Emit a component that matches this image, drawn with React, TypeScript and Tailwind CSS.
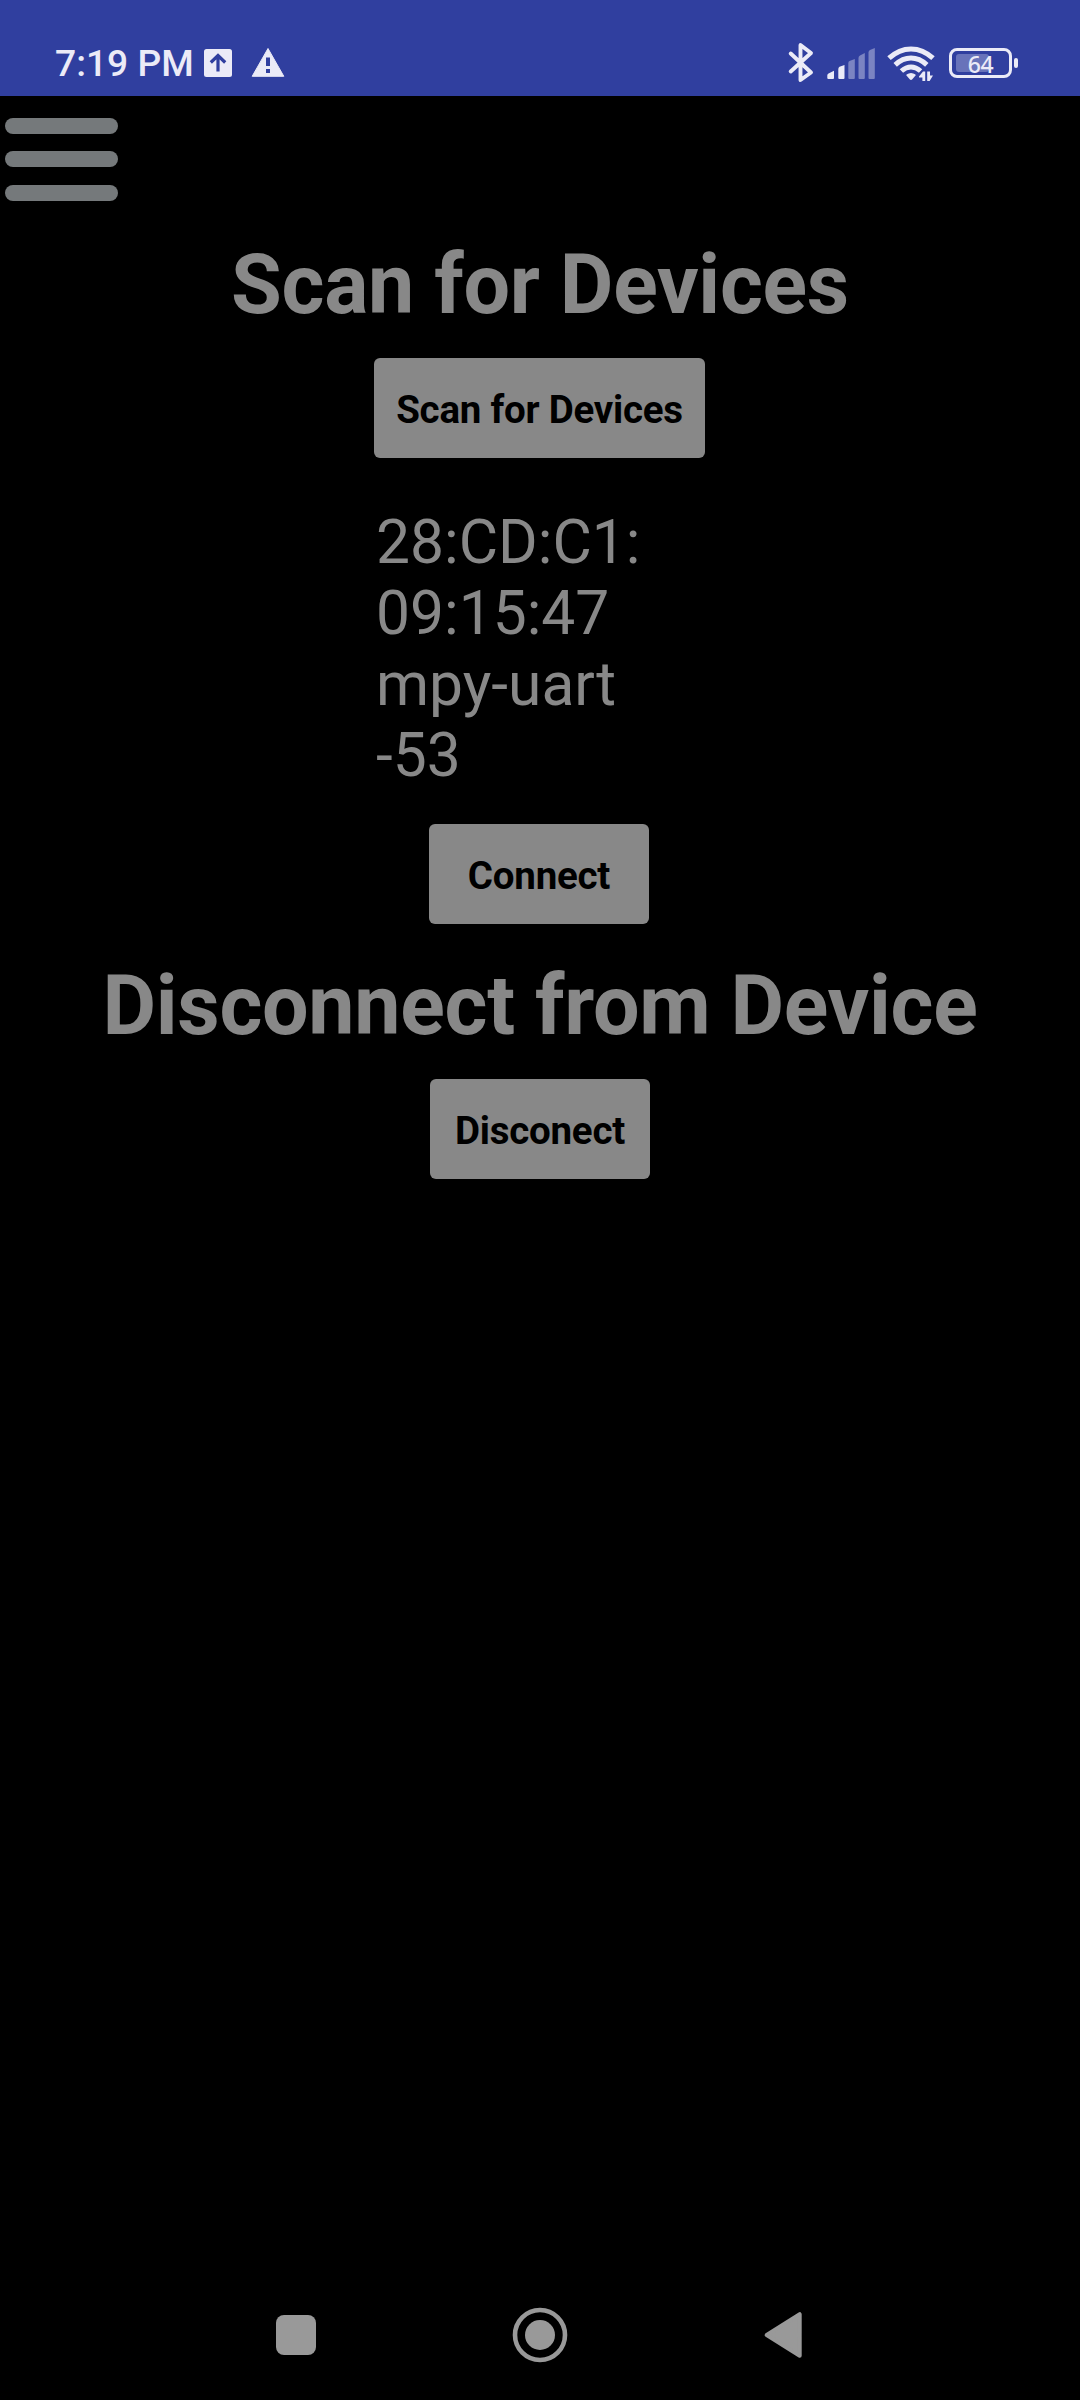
import type { ReactNode } from 'react';

function StatusBar() {
  return (
    <header className="flex h-24 items-start bg-[#303f9f] text-[#ebebf7]">
      <div className="w-[198px] shrink-0 pl-[55px] pt-[41px]">
        <span className="whitespace-nowrap text-[37.200px] leading-[44px] font-medium">7:19 PM</span>
      </div>
      <svg className="mt-10 h-10 w-[92px] shrink-0" viewBox="198 40 92 40" fill="none">
        <rect x="204" y="49" width="28" height="28" rx="2.5" fill="#ebebf7" />
        <path d="M218 71.500V56.500M210.800 62.500L218 55.500L225.200 62.500" stroke="#303f9f" strokeWidth="3.200" />
        <path d="M268 48.500L283.800 76.300H252.200Z" fill="#ebebf7" stroke="#ebebf7" strokeWidth="1" strokeLinejoin="round" />
        <path d="M266 57.500h4v8.500h-4zM266 69h4v4h-4z" fill="#303f9f" />
      </svg>
      <svg className="ml-[490px] mt-10 h-11 w-[160px] shrink-0" viewBox="780 40 160 44" fill="none">
        <path d="M790.700 53.500L811 72.500L800.500 80V45L811 53L790.700 71.500" stroke="#ebebf7" strokeWidth="3.900" strokeLinejoin="round" strokeLinecap="round" />
        <g fill="#ebebf7">
          <path d="M827.300 75.500Q827.300 74.200 828.500 73.500L834 70.800V78Q834 79 833 79H828.300Q827.300 79 827.300 78Z" />
          <path d="M838.300 69Q838.300 67.500 839.500 66.800L844.500 65V78Q844.500 79 843.500 79H839.300Q838.300 79 838.300 78Z" />
          <g opacity=".4">
            <path d="M848.300 63Q848.300 61.700 849.500 61L854.800 59V78Q854.800 79 853.800 79H849.300Q848.300 79 848.300 78Z" />
            <path d="M858.500 58Q858.500 56.200 860 55.500L864.800 53V78Q864.800 79 863.800 79H859.500Q858.500 79 858.500 78Z" />
            <path d="M868.500 52.500Q868.500 50.700 870 50L874.800 48V78Q874.800 79 873.800 79H869.500Q868.500 79 868.500 78Z" />
          </g>
          <path d="M906.500 74.500Q911 71.300 915.500 74.500V75.500L912.300 79.300Q911 80.500 909.700 79.300L906.500 75.500Z" />
          <path d="M919 76.500L923 71.500H925.200V81H922.400V77.500H919ZM927.200 71.500H930V75.500H933L929.600 81H927.200Z" />
        </g>
        <g stroke="#ebebf7" strokeWidth="5">
          <path d="M889 58.200Q899 48.900 911 48.900T933 58.200" />
          <path d="M895.200 64.800Q902.500 58 911 58T926.800 64.800" />
          <path d="M901.400 71Q906 66.900 911 66.900T920.600 71" />
        </g>
      </svg>
      <div className="ml-[9px] mt-12 flex items-center gap-0.5">
        <div className="relative flex h-[30px] w-[63px] items-center justify-center rounded-[8px] border-[3px] border-[#ebebf7]">
          <span className="absolute left-1 top-[3px] h-[18px] w-[33px] rounded-[3px] bg-[#ebebf7]/30" />
          <span className="relative pt-px font-['Noto_Sans',sans-serif] text-[23px] leading-6 font-medium tracking-[-0.500px]">64</span>
        </div>
        <span className="h-[10px] w-1 rounded-[2px] bg-[#ebebf7]" />
      </div>
    </header>
  );
}

function MenuButton() {
  return (
    <button aria-label="Menu" className="ml-[5px] mt-[22px] flex h-[83px] w-[113px] flex-col">
      <span className="mb-[17px] h-4 w-full rounded-full bg-[#75797b]" />
      <span className="mb-[18px] h-4 w-full rounded-full bg-[#75797b]" />
      <span className="h-4 w-full rounded-full bg-[#75797b]" />
    </button>
  );
}

function Title({ children }: { children: ReactNode }) {
  return (
    <h1 className="h-[97px] whitespace-nowrap text-center text-[82.500px] leading-[97px] font-bold tracking-[-0.300px]">
      {children}
    </h1>
  );
}

function ActionButton({ children, wide = false }: { children: ReactNode; wide?: boolean }) {
  return (
    <button
      className={`flex h-[100px] items-center justify-center rounded-[6px] bg-[#888888] pt-1 text-[38.500px] leading-[46px] font-bold tracking-[-0.240px] text-black ${wide ? 'w-[331px]' : 'w-[220px]'}`}
    >
      {children}
    </button>
  );
}

function NavigationBar() {
  return (
    <nav className="mt-auto flex h-[130px] items-center pl-[276px]">
      <button aria-label="Recent apps" className="h-10 w-10 rounded-[8px] bg-[#999999]" />
      <button aria-label="Home" className="ml-[196px]">
        <svg className="h-14 w-14" viewBox="0 0 56 56" fill="none">
          <circle cx="28" cy="28" r="25" stroke="#999999" strokeWidth="4.600" />
          <circle cx="28" cy="28" r="15" fill="#999999" />
        </svg>
      </button>
      <button aria-label="Back" className="ml-[196px]">
        <svg className="h-12 w-10" viewBox="0 0 40 48">
          <path d="M2.700 24L35.700 3.200V44.800Z" fill="#999999" stroke="#999999" strokeWidth="4" strokeLinejoin="round" />
        </svg>
      </button>
    </nav>
  );
}

const device = ['28:CD:C1:', '09:15:47', 'mpy-uart', '-53'];

export default function App() {
  return (
    <div className="flex h-[2400px] w-[1080px] flex-col overflow-hidden bg-black font-[Roboto,sans-serif] text-[#888888]">
      <StatusBar />
      <MenuButton />
      <main className="flex flex-col items-center pt-[35px]">
        <Title>Scan for Devices</Title>
        <div className="mt-[25px] pr-px">
          <ActionButton wide>Scan for Devices</ActionButton>
        </div>
        <div className="mt-[49px] w-[328px] text-[60.500px] leading-[71px]">
          {device.map((line) => (
            <p key={line}>{line}</p>
          ))}
        </div>
        <div className="mt-[33px] pr-0.5">
          <ActionButton>Connect</ActionButton>
        </div>
        <div className="mt-[33px]">
          <Title>Disconnect from Device</Title>
        </div>
        <div className="mt-[25px]">
          <ActionButton>Disconect</ActionButton>
        </div>
      </main>
      <NavigationBar />
    </div>
  );
}
